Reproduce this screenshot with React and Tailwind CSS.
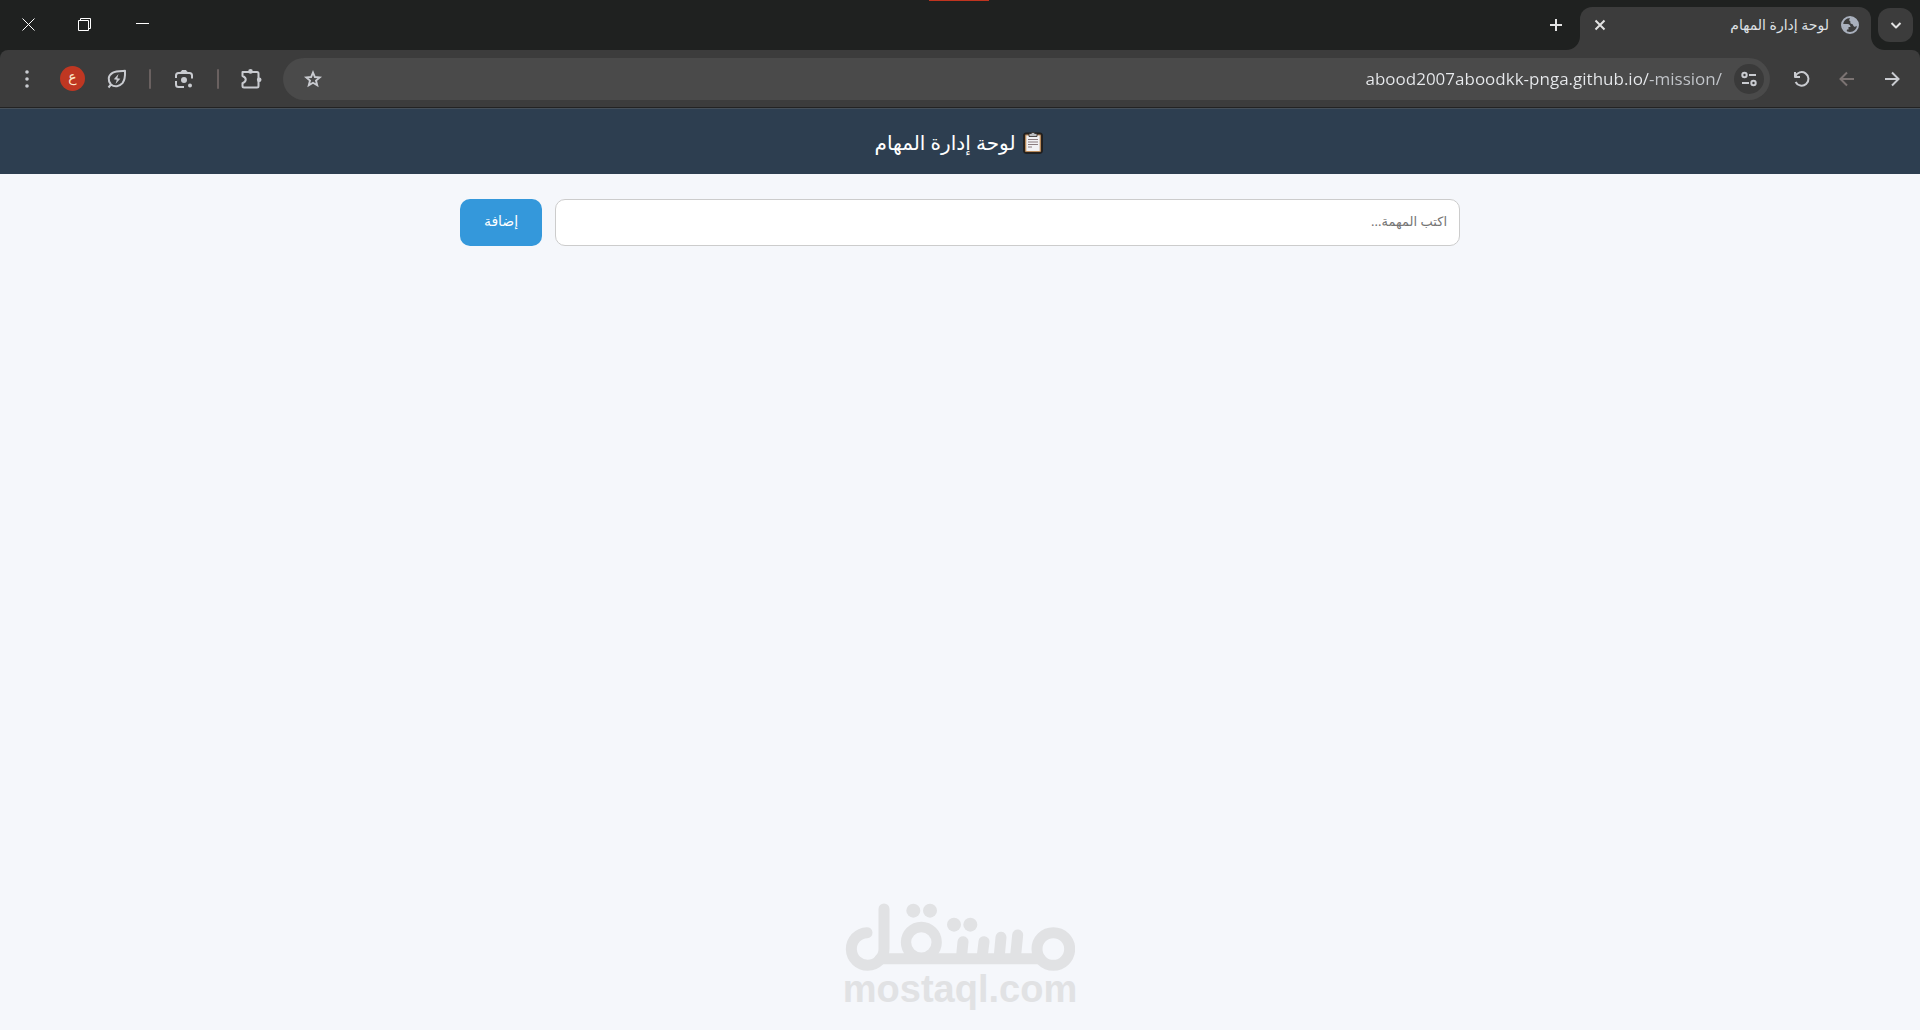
import React from "react";

function IconButton({ label, className = "", children }) {
  return (
    <button
      type="button"
      aria-label={label}
      className={"flex shrink-0 items-center justify-center text-[#c9cbd0] " + className}
    >
      {children}
    </button>
  );
}

function Stroke({ size = 20, width = 2, children, cap = "butt", join = "round" }) {
  return (
    <svg
      width={size}
      height={size}
      viewBox={`0 0 ${size} ${size}`}
      fill="none"
      stroke="currentColor"
      strokeWidth={width}
      strokeLinecap={cap}
      strokeLinejoin={join}
      aria-hidden="true"
    >
      {children}
    </svg>
  );
}

function TabFlare({ flip }) {
  return (
    <svg
      width="14"
      height="14"
      viewBox="0 0 14 14"
      className={"shrink-0 self-end " + (flip ? "-scale-x-100" : "")}
      aria-hidden="true"
    >
      <path d="M0 0C0 8 6 14 14 14H0Z" fill="#3c3c3c" />
    </svg>
  );
}

function Globe() {
  return (
    <svg width="18" height="18" viewBox="0 0 18 18" aria-hidden="true" className="shrink-0 text-[#a9b0bd]">
      <circle cx="9" cy="9" r="8" fill="none" stroke="currentColor" strokeWidth="2" />
      <path d="M9 2C8 3.500 8 5 9.500 5.500C9 7 9.500 8 11 8C12 8 12 9.500 13 10.500C14 11 15.500 10.500 16.500 9.500V6L13 2Z" fill="currentColor" />
      <path d="M1.500 8H6.500C8.500 8 9.500 9.500 9.500 11H7.500V13.500H6L5.500 16L2.500 13.500Z" fill="currentColor" />
    </svg>
  );
}

function TitleBar() {
  return (
    <div className="flex h-[50px] items-center bg-[#1f2120]">
      <IconButton label="البحث في علامات التبويب" className="ms-[7px] h-[34px] w-[35px] rounded-xl bg-[#3c3c3c]">
        <Stroke size={12}>
          <path d="M1.5 4L6 8.500L10.500 4" stroke="#e3e3e3" />
        </Stroke>
      </IconButton>
      <div className="-me-[7px] flex h-full w-[319px] -ms-[7px] items-stretch">
        <TabFlare flip={false} />
        <div className="mt-[7px] flex flex-1 items-center rounded-t-xl bg-[#3c3c3c] ps-3 pe-5 pb-[7px]">
          <Globe />
          <span className="ms-3 flex-1 text-sm whitespace-nowrap text-[#dfe1e5]">لوحة إدارة المهام</span>
          <button type="button" aria-label="إغلاق علامة التبويب" className="-me-[10px] flex size-5 items-center justify-center text-[#e3e3e3]">
            <Stroke size={12}>
              <path d="M1.500 1.500L10.500 10.500M10.500 1.500L1.500 10.500" />
            </Stroke>
          </button>
        </div>
        <TabFlare flip />
      </div>
      <IconButton label="علامة تبويب جديدة" className="ms-[3px] size-7">
        <Stroke size={14}>
          <path d="M7 1V13M1 7H13" stroke="#e3e3e3" />
        </Stroke>
      </IconButton>
      <div className="ms-auto flex h-full text-white">
        <button type="button" aria-label="تصغير" className="flex h-[47px] w-[58px] items-center justify-center">
          <Stroke size={13} width={1}>
            <path d="M0 6.500H13" />
          </Stroke>
        </button>
        <button type="button" aria-label="استعادة" className="flex h-[49px] w-[57px] items-center justify-center">
          <svg width="13" height="13" viewBox="0 0 13 13" fill="none" stroke="currentColor" aria-hidden="true">
            <path d="M.5 2.500H10.500V12.500H.5ZM2.500 2.500V.5H12.500V10.500H10.500" />
          </svg>
        </button>
        <button type="button" aria-label="إغلاق" className="flex h-[49px] w-[56px] items-center justify-center">
          <Stroke size={13} width={1}>
            <path d="M.5 .5L12.500 12.500M12.500 .5L.5 12.500" />
          </Stroke>
        </button>
      </div>
    </div>
  );
}

function Separator() {
  return <span className="mx-4 h-5 w-0.5 rounded-full bg-[#6a6160]" />;
}

function Toolbar() {
  return (
    <div className="bg-[#1f2120]">
      <div className="flex h-[57px] items-center rounded-t-lg bg-[#3c3c3c] ps-[6px] pe-[11px]">
        <IconButton label="للأمام" className="size-[45px]">
          <Stroke size={16} join="miter">
            <path d="M1 8H14.500M8 1.500L14.500 8L8 14.500" />
          </Stroke>
        </IconButton>
        <button type="button" disabled aria-label="رجوع" className="flex size-[45px] items-center justify-center text-[#7b7372]">
          <Stroke size={16} join="miter">
            <path d="M15 8H1.500M8 1.500L1.500 8L8 14.500" />
          </Stroke>
        </button>
        <IconButton label="إعادة التحميل" className="size-[45px]">
          <Stroke size={18}>
            <path d="M2 2V7H7M2.300 6.500A6.800 6.800 0 1 1 2.600 12" />
          </Stroke>
        </IconButton>
        <div className="ms-[9px] flex h-[42px] min-w-0 flex-1 items-center rounded-full bg-[#4a4a4a] px-[6px]">
          <IconButton label="معلومات الموقع" className="size-[30px] rounded-full bg-[#3a3a3a]">
            <Stroke size={16}>
              <circle cx="3.500" cy="4" r="2.200" />
              <path d="M8 4H15M1 12H8" />
              <circle cx="12.500" cy="12" r="2.200" />
            </Stroke>
          </IconButton>
          <input
            dir="ltr"
            type="text"
            aria-label="شريط العنوان"
            defaultValue="abood2007aboodkk-pnga.github.io/-mission/"
            className="mr-3 h-8 min-w-0 flex-1 bg-[linear-gradient(to_left,#c4c7cc_74px,#e8eaed_74px)] bg-clip-text text-right font-['Open_Sans',sans-serif] text-[17px] text-transparent outline-none"
          />
          <IconButton label="إضافة إشارة" className="me-2 size-8">
            <Stroke size={20} join="miter">
              <path d="M10 3.500L11.900 8L16.700 8.400L13 11.600L14.200 16.300L10 13.800L5.800 16.300L7 11.600L3.300 8.400L8.100 8Z" strokeWidth="1.900" />
            </Stroke>
          </IconButton>
        </div>
        <IconButton label="الإضافات" className="ms-4 size-8">
          <Stroke size={22}>
            <path d="M2.500 4H17A1.500 1.500 0 0 1 18.500 5.500V18A1.500 1.500 0 0 1 17 19.500H4A1.500 1.500 0 0 1 2.500 18V15.200C6.800 13.500 6.800 9.700 2.500 8Z" />
            <circle cx="10.500" cy="3.400" r="2.300" fill="currentColor" stroke="none" />
            <circle cx="19.200" cy="11.700" r="2.300" fill="currentColor" stroke="none" />
          </Stroke>
        </IconButton>
        <Separator />
        <IconButton label="عدسة" className="h-8 w-[34px]">
          <Stroke size={20}>
            <path d="M2 9V6.500A2.500 2.500 0 0 1 4.500 4H15.500A2.500 2.500 0 0 1 18 6.500V9.500M2 12V15.500A2.500 2.500 0 0 0 4.500 18H10" />
            <path d="M6.500 3.500L8 1.500H12L13.500 3.500Z" fill="currentColor" strokeWidth="1" />
            <circle cx="10" cy="11" r="3" fill="currentColor" stroke="none" />
            <circle cx="16" cy="16.500" r="2" fill="currentColor" stroke="none" />
          </Stroke>
        </IconButton>
        <Separator />
        <IconButton label="توفير الطاقة" className="size-8">
          <Stroke size={20}>
            <path d="M4 15.500C.5 11.500 1 6.500 5.500 3.800C9 1.700 14 2 18 1.800C18.200 6 18 11 15.500 14.200C12.500 17.500 7.500 18.500 4 15.500L1.500 18.500" />
            <path d="M11.500 5L6.800 10.300L9.800 10.700L8.500 15L13.300 9.800L10.300 9.200Z" fill="currentColor" stroke="none" />
          </Stroke>
        </IconButton>
        <button type="button" aria-label="الملف الشخصي" className="ms-4 flex size-[25px] items-center justify-center rounded-full bg-[#bf3722] pb-1 text-sm leading-none text-[#fbe6c8]">
          ع
        </button>
        <IconButton label="القائمة" className="ms-[17px] size-8">
          <svg width="4" height="18" viewBox="0 0 4 18" fill="currentColor" aria-hidden="true">
            <circle cx="2" cy="2" r="1.800" />
            <circle cx="2" cy="9" r="1.800" />
            <circle cx="2" cy="16" r="1.800" />
          </svg>
        </IconButton>
      </div>
    </div>
  );
}

function Clipboard() {
  return (
    <svg width="20" height="23" viewBox="0 0 20 23" aria-hidden="true" className="shrink-0">
      <rect x=".7" y="2" width="18.600" height="20.300" rx="2" fill="#2a2522" stroke="#1f1c1a" />
      <rect x="2" y="3.500" width="16" height="17.500" rx="1" fill="#b98a5a" />
      <path d="M3.300 4.500H16.700V20H3.300Z" fill="#f1f1f4" />
      <path d="M6 5.500V2.500H8.300A1.800 1.800 0 0 1 11.700 2.500H14V5.500Z" fill="#b9bcc0" stroke="#2a2522" strokeWidth=".8" />
      <path d="M5 8.500H15M5 11H15M5 13.500H15M5 16H9" stroke="#8b7d80" strokeWidth="1" />
    </svg>
  );
}

function Logo() {
  return (
    <footer dir="ltr" className="mt-auto flex flex-col items-center pb-[23px] text-[#e1e2e4]">
      <svg width="230" height="68" viewBox="75 68 690 204" fill="none" stroke="currentColor" strokeWidth="33" strokeLinecap="round" role="img" aria-label="مستقل">
        <circle cx="700" cy="206" r="49" />
        <path d="M180 235.500H660" />
        <circle cx="304" cy="186" r="46" strokeWidth="31" />
        <path d="M141 157A49 49 0 1 0 192 206V86" />
        <path d="M429 184L425 225M492 184L487 225M543 171L538 225M593 164L587 225" />
        <g fill="currentColor" stroke="none">
          <circle cx="280" cy="91" r="21" />
          <circle cx="330" cy="91" r="21" />
          <circle cx="402" cy="133" r="21" />
          <circle cx="451" cy="133" r="21" />
        </g>
      </svg>
      <span className="font-['Liberation_Sans',Arial,sans-serif] text-[38px] leading-9 font-bold">mostaql.com</span>
    </footer>
  );
}

export default function App() {
  return (
    <div dir="rtl" className="flex min-h-screen flex-col bg-[#f5f7fb] font-['Noto_Sans','DejaVu_Sans',sans-serif]">
      <div className="relative border-b border-[#232323]">
        <TitleBar />
        <Toolbar />
        <span className="absolute top-0 left-1/2 h-px w-[60px] -translate-x-[31px] bg-[#c0341f]" />
      </div>
      <header className="flex h-[66px] items-center justify-center gap-[7px] border-t border-[#46505a] bg-[#2d3e50] ps-[3px] pt-0.5 text-white">
        <Clipboard />
        <h1 className="text-xl font-medium">لوحة إدارة المهام</h1>
      </header>
      <main className="mx-auto w-full max-w-[1000px] pt-[25px]">
        <form className="flex gap-[13px]" onSubmit={(e) => e.preventDefault()}>
          <input
            type="text"
            aria-label="اكتب المهمة"
            placeholder="اكتب المهمة..."
            className="h-[47px] min-w-0 flex-1 rounded-[10px] border border-[#cccccc] bg-white px-3 pb-1 text-[13px] outline-none placeholder:text-[#757575]"
          />
          <button type="submit" className="h-[47px] w-[82px] rounded-[10px] bg-[#3498db] pb-1 text-sm text-white">
            إضافة
          </button>
        </form>
      </main>
      <Logo />
    </div>
  );
}
